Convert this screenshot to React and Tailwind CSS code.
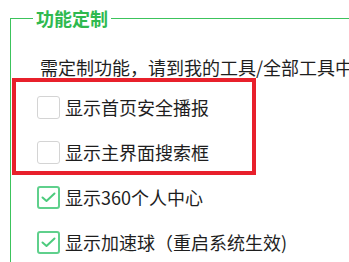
import React from "react";

const options = [
  { id: "home", label: "显示首页安全播报", checked: false, boxed: true },
  { id: "search", label: "显示主界面搜索框", checked: false, boxed: true },
  { id: "center", label: "显示360个人中心", checked: true },
  { id: "ball", label: "显示加速球（重启系统生效)", checked: true },
];

const CheckBox = ({ checked }) =>
  checked ? (
    <span className="flex h-[23px] w-[23px] shrink-0 items-center justify-center rounded-[3px] border-2 border-[#5fd08c] bg-white">
      <svg width="15" height="11" viewBox="0 0 15 11" fill="none">
        <path
          d="M1.5 5.5 L5.5 9 L13.5 1.5"
          stroke="#4ccb7d"
          strokeWidth="2"
          strokeLinecap="round"
          strokeLinejoin="round"
        />
      </svg>
    </span>
  ) : (
    <span className="h-[23px] w-[23px] shrink-0 rounded-[3px] border border-[#d4d4d4] bg-white" />
  );

const OptionRow = ({ label, checked }) => (
  <label className="flex h-[23px] items-center gap-[5px]">
    <CheckBox checked={checked} />
    <span className="text-[18px] leading-[23px] text-[#1e1e1e] whitespace-nowrap">{label}</span>
  </label>
);

export default function App() {
  const boxed = options.filter((o) => o.boxed);
  const rest = options.filter((o) => !o.boxed);

  return (
    <div
      className="h-[262px] w-[349px] overflow-hidden bg-white"
      style={{ fontFamily: '"Noto Sans CJK SC", "Noto Sans", sans-serif' }}
    >
      <fieldset className="ml-[10px] mt-[5px] border-l border-t border-[#3cc35c] pb-[30px]">
        <legend className="ml-[22px] px-[3px] text-[18px] font-bold leading-[27px] text-[#2fb94f]">
          功能定制
        </legend>

        <p className="mt-[24px] pl-[29px] text-[18px] leading-[22px] text-[#1e1e1e] whitespace-nowrap">
          需定制功能，请到我的工具/全部工具中添加
        </p>

        {/* highlighted options */}
        <div className="ml-[1px] flex w-[244px] flex-col gap-[22px] border-4 border-[#e8202b] pb-[7px] pl-[21px] pt-[14px]">
          {boxed.map((o) => (
            <OptionRow key={o.id} label={o.label} checked={o.checked} />
          ))}
        </div>

        <div className="mt-[11px] flex flex-col gap-[22px] pl-[26px]">
          {rest.map((o) => (
            <OptionRow key={o.id} label={o.label} checked={o.checked} />
          ))}
        </div>
      </fieldset>
    </div>
  );
}
